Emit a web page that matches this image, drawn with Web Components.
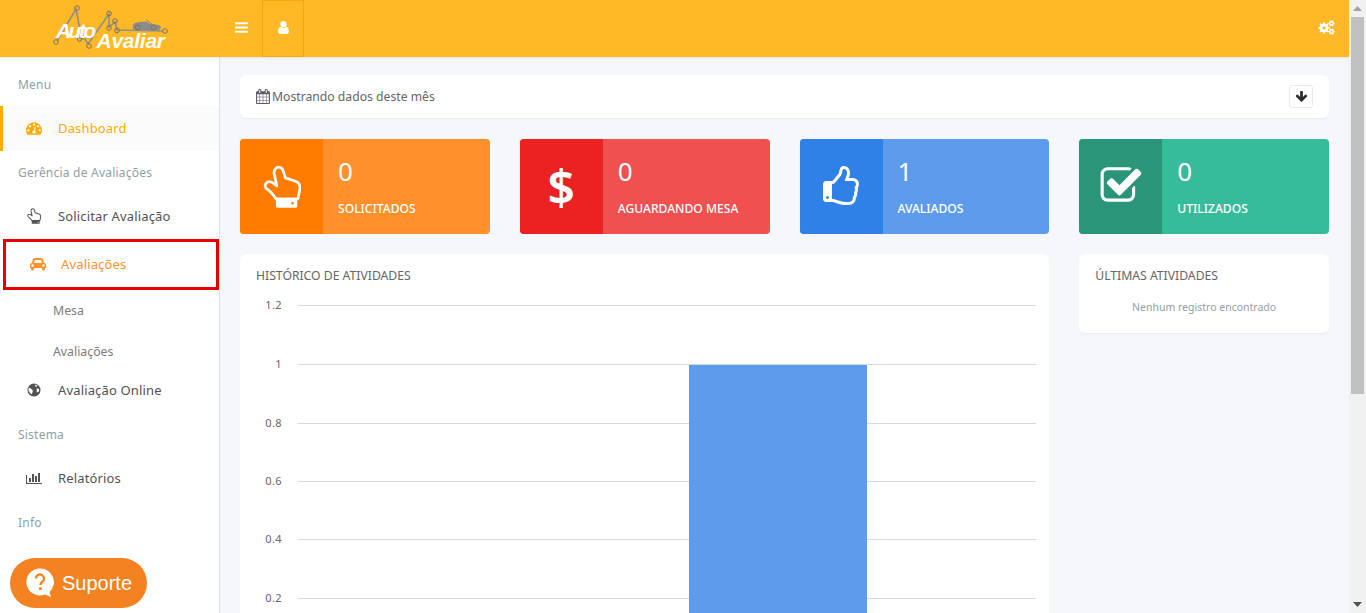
<!DOCTYPE html>
<html lang="pt-BR">
<head>
<meta charset="utf-8">
<title>Auto Avaliar</title>
<style>
  html, body { margin: 0; padding: 0; height: 100%; overflow: hidden; background: #f5f7fa; }
  body { font-family: "Noto Sans", "Open Sans", sans-serif; font-size: 13px; color: #656565; }
</style>
</head>
<body>
<aa-app>
  <aa-header slot="header"></aa-header>
  <aa-sidebar slot="sidebar">
    <aa-nav-label>Menu</aa-nav-label>
    <aa-nav-item icon="dashboard" active>Dashboard</aa-nav-item>
    <aa-nav-label>Gerência de Avaliações</aa-nav-label>
    <aa-nav-item icon="hand">Solicitar Avaliação</aa-nav-item>
    <aa-nav-item icon="car" highlight>Avaliações</aa-nav-item>
    <aa-nav-sub>Mesa</aa-nav-sub>
    <aa-nav-sub last>Avaliações</aa-nav-sub>
    <aa-nav-item icon="globe">Avaliação Online</aa-nav-item>
    <aa-nav-label>Sistema</aa-nav-label>
    <aa-nav-item icon="chart">Relatórios</aa-nav-item>
    <aa-nav-label>Info</aa-nav-label>
  </aa-sidebar>
  <aa-filter-bar>Mostrando dados deste mês</aa-filter-bar>
  <aa-stats>
    <aa-stat-card icon="hand" value="0" pane="#ff7c00" body="#ff902b">SOLICITADOS</aa-stat-card>
    <aa-stat-card icon="dollar" value="0" pane="#ec2121" body="#f05050">AGUARDANDO MESA</aa-stat-card>
    <aa-stat-card icon="thumb" value="1" pane="#2f80e7" body="#5d9cec">AVALIADOS</aa-stat-card>
    <aa-stat-card icon="check" value="0" pane="#2b957a" body="#37bc9b">UTILIZADOS</aa-stat-card>
    <aa-panel class="wide" heading="HISTÓRICO DE ATIVIDADES"><aa-chart></aa-chart></aa-panel>
    <aa-panel heading="ÚLTIMAS ATIVIDADES"><aa-empty>Nenhum registro encontrado</aa-empty></aa-panel>
  </aa-stats>
  <aa-support slot="overlay"></aa-support>
  <aa-scrollbar slot="scrollbar"></aa-scrollbar>
</aa-app>

<script>
// gear outline with a round hole, used by the header cogs icon
function gear(cx, cy, outer, inner, hole, teeth) {
  let d = "";
  for (let i = 0; i < teeth; i++) {
    const step = (Math.PI * 2) / teeth;
    const a = i * step;
    const pts = [[inner, a - step * 0.32], [outer, a - step * 0.2], [outer, a + step * 0.2], [inner, a + step * 0.32]];
    pts.forEach(([r, t], j) => {
      const cmd = i === 0 && j === 0 ? "M" : "L";
      d += `${cmd}${(cx + r * Math.cos(t)).toFixed(2)} ${(cy + r * Math.sin(t)).toFixed(2)}`;
    });
  }
  d += `Z M${cx - hole} ${cy} a${hole} ${hole} 0 1 0 ${hole * 2} 0 a${hole} ${hole} 0 1 0 ${-hole * 2} 0 Z`;
  return d;
}

const FA = "0 0 1792 1792";
const ICONS = {
  bars: [FA, '<path d="M1664 1344v128q0 26-19 45t-45 19h-1408q-26 0-45-19t-19-45v-128q0-26 19-45t45-19h1408q26 0 45 19t19 45zm0-512v128q0 26-19 45t-45 19h-1408q-26 0-45-19t-19-45v-128q0-26 19-45t45-19h1408q26 0 45 19t19 45zm0-512v128q0 26-19 45t-45 19h-1408q-26 0-45-19t-19-45v-128q0-26 19-45t45-19h1408q26 0 45 19t19 45z"/>'],
  user: [FA, '<path d="M1536 1399q0 109-62.5 187t-150.5 78h-854q-88 0-150.5-78t-62.5-187q0-85 8.5-160.5t31.5-152 58.5-131 94-89 134.5-34.5q131 128 313 128t313-128q76 0 134.5 34.5t94 89 58.5 131 31.5 152 8.5 160.5zm-256-887q0 159-112.5 271.5t-271.5 112.5-271.5-112.5-112.5-271.5 112.5-271.5 271.5-112.5 271.5 112.5 112.5 271.5z"/>'],
  down: [FA, '<path d="M1675 832q0 53-37 90l-651 652q-39 37-91 37-53 0-90-37l-651-652q-38-36-38-90 0-53 38-91l74-75q39-37 91-37 53 0 90 37l294 294v-704q0-52 38-90t90-38h128q52 0 90 38t38 90v704l294-294q37-37 90-37 52 0 91 37l75 75q37 39 37 91z"/>'],
  check: [FA, '<path d="M1472 930v318q0 119-84.5 203.5t-203.5 84.5h-832q-119 0-203.5-84.5t-84.5-203.5v-832q0-119 84.5-203.5t203.5-84.5h832q63 0 117 25 15 7 18 23 3 17-9 29l-49 49q-10 10-23 10-3 0-9-2-23-6-45-6h-832q-66 0-113 47t-47 113v832q0 66 47 113t113 47h832q66 0 113-47t47-113v-254q0-13 9-22l64-64q10-10 23-10 6 0 12 3 20 8 20 29zm231-489l-814 814q-24 24-57 24t-57-24l-430-430q-24-24-24-57t24-57l110-110q24-24 57-24t57 24l263 263 647-647q24-24 57-24t57 24l110 110q24 24 24 57t-24 57z"/>'],
  car: ["0 0 2048 1792", '<path d="M480 1088q0-66-47-113t-113-47-113 47-47 113 47 113 113 47 113-47 47-113zm36-320h1016l-89-357q-2-8-14-17.5t-21-9.5h-768q-9 0-21 9.5t-14 17.5zm1372 320q0-66-47-113t-113-47-113 47-47 113 47 113 113 47 113-47 47-113zm160-96v384q0 14-9 23t-23 9h-96v128q0 80-56 136t-136 56-136-56-56-136v-128h-1024v128q0 80-56 136t-136 56-136-56-56-136v-128h-96q-14 0-23-9t-9-23v-384q0-93 65.5-158.5t158.5-65.5h28l105-419q23-94 104-157.5t179-63.5h768q98 0 179 63.5t104 157.5l105 419h28q93 0 158.5 65.5t65.5 158.5z"/>'],
  thumb: [FA, '<path d="M384 1344q0-26-19-45t-45-19-45 19-19 45 19 45 45 19 45-19 19-45zm1152-576q0-51-39-89.5t-89-38.5h-352q0-58 48-159.5t48-160.5q0-98-32-145t-128-47q-26 26-38 85t-30.5 125.5-59.5 109.5q-22 23-77 91-4 5-23 30t-31.5 41-34.5 42.5-40 44-38.5 35.5-40 27-35.5 9h-32v640h32q13 0 31.5 3t33 6.5 38 11 35 11.5 35.5 12.5 29 10.5q211 73 342 73h121q192 0 192-167 0-26-5-56 30-16 47.5-52.5t17.5-73.5-18-69q53-50 53-119 0-25-10-55.5t-25-47.5q32-1 53.5-47t21.5-81zm128-1q0 89-49 163 9 33 9 69 0 77-38 144 3 21 3 43 0 101-60 178 1 139-85 219.5t-227 80.5h-129q-96 0-189.5-22.5t-216.5-65.5q-116-40-138-40h-288q-53 0-90.5-37.5t-37.5-90.5v-640q0-53 37.5-90.5t90.5-37.5h274q36-24 137-155 58-75 107-128 24-25 35.5-85.5t30.5-126.5 62-108q39-37 90-37 84 0 151 32.5t102 101.5 35 186q0 93-48 192h176q104 0 180 76t76 179z"/>'],
  dashboard: [FA, '<path d="M384 1152q0-53-37.5-90.5t-90.5-37.5-90.5 37.5-37.5 90.5 37.5 90.5 90.5 37.5 90.5-37.5 37.5-90.5zm192-448q0-53-37.5-90.5t-90.5-37.5-90.5 37.5-37.5 90.5 37.5 90.5 90.5 37.5 90.5-37.5 37.5-90.5zm428 481l101-382q6-26-7.5-48.5t-38.5-29.5-48 6.5-30 39.5l-101 382q-60 5-107 43.5t-63 98.5q-20 77 20 146t117 89 146-20 89-117q16-60-6-117t-72-91zm660-33q0-53-37.5-90.5t-90.5-37.5-90.5 37.5-37.5 90.5 37.5 90.5 90.5 37.5 90.5-37.5 37.5-90.5zm-640-640q0-53-37.5-90.5t-90.5-37.5-90.5 37.5-37.5 90.5 37.5 90.5 90.5 37.5 90.5-37.5 37.5-90.5zm448 192q0-53-37.5-90.5t-90.5-37.5-90.5 37.5-37.5 90.5 37.5 90.5 90.5 37.5 90.5-37.5 37.5-90.5zm320 448q0 261-141 483-19 29-54 29h-1402q-35 0-54-29-141-221-141-483 0-182 71-348t191-286 286-191 348-71 348 71 286 191 191 286 71 348z"/>'],
  chart: ["0 0 2048 1792", '<path d="M640 896v512h-256v-512h256zm384-512v1024h-256v-1024h256zm1024 1152v128h-2048v-1152h128v1024h1920zm-640-896v768h-256v-768h256zm384-384v1152h-256v-1152h256z"/>'],
  calendar: ["0 0 1664 1792", '<path d="M128 1664h288v-288h-288v288zm352 0h320v-288h-320v288zm-352-352h288v-320h-288v320zm352 0h320v-320h-320v320zm-352-384h288v-288h-288v288zm736 736h320v-288h-320v288zm-384-736h320v-288h-320v288zm768 736h288v-288h-288v288zm-384-352h320v-320h-320v320zm-352-864v-288q0-13-9.5-22.5t-22.5-9.5h-64q-13 0-22.5 9.5t-9.5 22.5v288q0 13 9.5 22.5t22.5 9.5h64q13 0 22.5-9.5t9.5-22.5zm736 864h288v-320h-288v320zm-384-384h320v-288h-320v288zm384 0h288v-288h-288v288zm32-480v-288q0-13-9.5-22.5t-22.5-9.5h-64q-13 0-22.5 9.5t-9.5 22.5v288q0 13 9.5 22.5t22.5 9.5h64q13 0 22.5-9.5t9.5-22.5zm384-64v1280q0 52-38 90t-90 38h-1408q-52 0-90-38t-38-90v-1280q0-52 38-90t90-38h128v-96q0-66 47-113t113-47h64q66 0 113 47t47 113v96h384v-96q0-66 47-113t113-47h64q66 0 113 47t47 113v96h128q52 0 90 38t38 90z"/>'],
  hand: ["0 0 110 127", '<path d="M37 100 C30 88 24 80 12 72 C5 67 3 60 8 54 C13 48 21 48 28 53 L40 62 L32 27 C30 16 36 6 45 6 C53 6 58 12 60 22 L65 38 L95 48 C105 52 109 60 108 70 L102 100 Z" fill="none" stroke="currentColor" stroke-width="8" stroke-linejoin="round"/><path d="M37 100 H100 V122 Q100 126 96 126 H42 Q37 126 37 122 Z"/><circle cx="86" cy="113" r="4" fill="var(--hole, #fff)"/>'],
  globe: [FA, '<circle cx="896" cy="896" r="730"/><path fill="var(--hole, #fff)" d="M1000 300 C1100 310 1200 350 1290 420 L1180 520 L1040 470 Z M1180 760 L1380 720 L1480 860 L1430 1060 L1300 1180 L1200 1100 L1220 920 Z M300 620 L520 720 L720 860 L760 1080 L640 1380 C480 1280 300 1100 270 860 Z"/>'],
  cogs: ["0 0 20 18", `<path fill-rule="evenodd" d="${gear(7, 9.5, 6.9, 5.2, 2, 8)}"/><path fill-rule="evenodd" d="${gear(16, 4, 3.9, 2.9, 1.2, 6)}"/><path fill-rule="evenodd" d="${gear(16, 14, 3.9, 2.9, 1.2, 6)}"/>`]
};

class AaIcon extends HTMLElement {
  connectedCallback() {
    const [box, body] = ICONS[this.getAttribute("name")];
    this.attachShadow({ mode: "open" }).innerHTML = `
      <style>
        :host { display: inline-flex; align-items: center; justify-content: center; line-height: 0; }
        svg { width: 100%; height: 100%; fill: currentColor; display: block; }
      </style>
      <svg viewBox="${box}" xmlns="http://www.w3.org/2000/svg">${body}</svg>`;
  }
}

class AaApp extends HTMLElement {
  constructor() {
    super();
    this.attachShadow({ mode: "open" }).innerHTML = `
      <style>
        :host { display: flex; height: 613px; width: 1366px; overflow: hidden; position: relative; }
        .page { width: 1349px; display: flex; flex-direction: column; height: 613px; overflow: hidden; flex: none; }
        .body { display: flex; flex: 1; min-height: 0; }
        .content { flex: 1; min-width: 0; padding: 18px 20px 0; display: flex; flex-direction: column; gap: 21px; overflow: hidden; }
      </style>
      <div class="page">
        <slot name="header"></slot>
        <div class="body">
          <slot name="sidebar"></slot>
          <div class="content"><slot></slot></div>
        </div>
      </div>
      <slot name="scrollbar"></slot>
      <slot name="overlay"></slot>`;
  }
}

class AaHeader extends HTMLElement {
  constructor() {
    super();
    this.attachShadow({ mode: "open" }).innerHTML = `
      <style>
        :host { display: flex; align-items: stretch; height: 57px; flex: none; background: #ffb927; color: #fff; box-shadow: 0 1px 2px rgba(0,0,0,.08); position: relative; z-index: 2; }
        .brand { width: 220px; flex: none; display: flex; align-items: center; }
        .toggle { width: 42px; display: flex; align-items: center; justify-content: center; padding-bottom: 2px; box-sizing: border-box; }
        .toggle + .toggle { border: 1px solid #f7a70e; }
        .spacer { flex: 1; }
        .cog { margin: 0 14px 3px 0; align-self: center; width: 17px; height: 15px; }
        aa-icon.bars { width: 15px; height: 15px; }
        aa-icon.user { width: 15px; height: 15px; }
        svg text { font-family: "Liberation Sans", Arial, sans-serif; font-style: italic; font-weight: 700; fill: #fff; }
      </style>
      <div class="brand">
        <svg width="220" height="57" viewBox="0 0 220 57" xmlns="http://www.w3.org/2000/svg">
          <g fill="none" stroke="#8e8e8e" stroke-width="1.6">
            <path d="M57 41 L76 9 L80 30 L79 38 L85 39 L88 44 L109 14 L109 27 L115 22 L117 30 L163 31"/>
            <g stroke="#7b7460" stroke-width="1">
              <circle cx="56" cy="42" r="2.3"/><circle cx="77" cy="8" r="2.3"/><circle cx="79.5" cy="39" r="2.3"/>
              <circle cx="89" cy="46" r="2.3"/><circle cx="109" cy="13.5" r="2.3"/><circle cx="109" cy="28" r="2.3"/>
              <circle cx="115" cy="21" r="2.3"/><circle cx="117" cy="30.5" r="2.3"/><circle cx="165" cy="31" r="2.3"/>
            </g>
          </g>
          <path d="M133 29 C132 24 134 23 139 22 L146 21.5 L151 24 L159 25 L161 27 L160 29.5 C156 30.5 137 30.5 133 29 Z" fill="#8b8b8b"/>
          <path d="M146 19.5 L152 24" stroke="#8b8b8b" stroke-width="1" fill="none"/>
          <circle cx="137.5" cy="27.5" r="2.4" fill="#8b8b8b" stroke="#7b7460"/><circle cx="153.5" cy="27.5" r="2.4" fill="#8b8b8b" stroke="#7b7460"/>
          <text x="56" y="38" font-size="21" textLength="40">Auto</text>
          <text x="96.5" y="47.5" font-size="21" textLength="68.5">Avaliar</text>
        </svg>
      </div>
      <div class="toggle"><aa-icon class="bars" name="bars"></aa-icon></div>
      <div class="toggle"><aa-icon class="user" name="user"></aa-icon></div>
      <div class="spacer"></div>
      <aa-icon class="cog" name="cogs"></aa-icon>`;
  }
}

class AaSidebar extends HTMLElement {
  constructor() {
    super();
    this.attachShadow({ mode: "open" }).innerHTML = `
      <style>
        :host { display: flex; flex-direction: column; width: 220px; flex: none; box-sizing: border-box; background: #fff; border-right: 1px solid #dde2e8; padding-top: 6px; overflow: hidden; }
      </style>
      <slot></slot>`;
  }
}

class AaNavLabel extends HTMLElement {
  constructor() {
    super();
    this.attachShadow({ mode: "open" }).innerHTML = `
      <style>
        :host { display: flex; align-items: center; height: 43px; padding-left: 18px; font-size: 12px; letter-spacing: .22px; color: #909fa7; flex: none; }
      </style>
      <slot></slot>`;
  }
}

class AaNavItem extends HTMLElement {
  connectedCallback() {
    const name = this.getAttribute("icon");
    this.attachShadow({ mode: "open" }).innerHTML = `
      <style>
        :host { display: flex; align-items: center; height: 45px; box-sizing: border-box; padding: 0 0 2px 23px; border-left: 3px solid transparent; gap: 16px; color: #515253; font-size: 13px; letter-spacing: .15px; flex: none; --hole: #fff; }
        :host([active]) { background: #fbfbfb; border-left-color: #ffab00; color: #ffab00; --hole: #fbfbfb; }
        :host([highlight]) { height: 51px; margin-left: 3px; border: 3px solid #e60000; padding-left: 24px; gap: 15px; color: #ff902b; }
        aa-icon { width: 16px; height: 16px; flex: none; }
      </style>
      <aa-icon name="${name}"></aa-icon>
      <span><slot></slot></span>`;
  }
}

class AaNavSub extends HTMLElement {
  constructor() {
    super();
    this.attachShadow({ mode: "open" }).innerHTML = `
      <style>
        :host { display: flex; align-items: center; height: 41px; padding-left: 53px; font-size: 12.3px; color: #7c7c7c; flex: none; }
        :host([last]) { margin-bottom: -4px; }
      </style>
      <slot></slot>`;
  }
}

class AaFilterBar extends HTMLElement {
  constructor() {
    super();
    this.attachShadow({ mode: "open" }).innerHTML = `
      <style>
        :host { display: flex; align-items: center; height: 43px; flex: none; box-sizing: border-box; padding: 0 16px; background: #fff; border-radius: 6px; box-shadow: 0 1px 1px rgba(0,0,0,.05); color: #656565; font-size: 12.2px; }
        aa-icon.cal { width: 14px; height: 15px; margin-right: 2px; color: #5f5a66; }
        span { flex: 1; }
        button { width: 24px; height: 23px; padding: 0; display: flex; align-items: center; justify-content: center; background: #fff; border: 1px solid #eaeaea; border-radius: 3px; color: #2b2b2b; }
        button aa-icon { width: 13px; height: 13px; }
      </style>
      <aa-icon class="cal" name="calendar"></aa-icon>
      <span><slot></slot></span>
      <button><aa-icon name="down"></aa-icon></button>`;
  }
}

class AaStats extends HTMLElement {
  constructor() {
    super();
    this.attachShadow({ mode: "open" }).innerHTML = `
      <style>
        :host { display: grid; grid-template-columns: repeat(4, 1fr); column-gap: 30px; row-gap: 20px; align-items: start; flex: none; }
        ::slotted(.wide) { grid-column: span 3; }
      </style>
      <slot></slot>`;
  }
}

class AaStatCard extends HTMLElement {
  connectedCallback() {
    const name = this.getAttribute("icon");
    const isDollar = name === "dollar";
    const glyph = isDollar
      ? `<span class="dollar">$</span>`
      : `<aa-icon class="${name}" name="${name}"></aa-icon>`;
    this.attachShadow({ mode: "open" }).innerHTML = `
      <style>
        :host { display: flex; height: 95px; border-radius: 4px; overflow: hidden; color: #fff; background: ${this.getAttribute("body")}; --hole: ${this.getAttribute("pane")}; }
        .pane { width: 83px; flex: none; display: flex; align-items: center; justify-content: center; background: ${this.getAttribute("pane")}; }
        .pane aa-icon.hand { width: 38px; height: 43px; }
        .pane aa-icon.thumb { width: 42px; height: 42px; }
        .pane aa-icon.check { width: 44px; height: 44px; margin-top: -2px; }
        .dollar { font: 600 48px "Noto Sans", sans-serif; line-height: 1; }
        .text { padding: 0 15px; display: flex; flex-direction: column; }
        .value { font-size: 26px; line-height: 32px; margin-top: 16px; }
        .label { font-size: 12.1px; line-height: 18px; margin-top: 13px; font-weight: 500; }
      </style>
      <div class="pane">${glyph}</div>
      <div class="text">
        <div class="value">${this.getAttribute("value")}</div>
        <div class="label"><slot></slot></div>
      </div>`;
  }
}

class AaPanel extends HTMLElement {
  connectedCallback() {
    this.attachShadow({ mode: "open" }).innerHTML = `
      <style>
        :host { display: block; background: #fff; border-radius: 6px; box-shadow: 0 1px 1px rgba(0,0,0,.05); min-width: 0; }
        h2 { margin: 0; padding: 13px 16px 0; font-size: 12.2px; line-height: 18px; font-weight: 400; color: #656565; }
      </style>
      <h2>${this.getAttribute("heading")}</h2>
      <slot></slot>`;
  }
}

class AaEmpty extends HTMLElement {
  constructor() {
    super();
    this.attachShadow({ mode: "open" }).innerHTML = `
      <style>
        :host { display: block; text-align: center; font-size: 10.5px; line-height: 16px; color: #909fa7; padding: 14px 16px 18px; }
      </style>
      <slot></slot>`;
  }
}

class AaChart extends HTMLElement {
  connectedCallback() {
    const ticks = [["1.2", 20], ["1", 79], ["0.8", 138], ["0.6", 196], ["0.4", 254], ["0.2", 313]];
    const rows = ticks.map(([t, y]) => `
      <line x1="58" x2="796" y1="${y + 0.5}" y2="${y + 0.5}" stroke="#d9d9d9"/>
      <text x="42" y="${y + 4}" text-anchor="end">${t}</text>`).join("");
    this.attachShadow({ mode: "open" }).innerHTML = `
      <style>
        :host { display: block; height: 340px; overflow: hidden; }
        svg { display: block; }
        text { font-family: "Noto Sans", sans-serif; font-size: 11px; letter-spacing: .4px; fill: #666; }
      </style>
      <svg width="809" height="340" xmlns="http://www.w3.org/2000/svg">
        ${rows}
        <rect x="449" y="80" width="178" height="300" fill="#5d9cec"/>
      </svg>`;
  }
}

class AaSupport extends HTMLElement {
  constructor() {
    super();
    this.attachShadow({ mode: "open" }).innerHTML = `
      <style>
        :host { position: absolute; left: 10px; top: 558px; width: 137px; height: 50px; box-sizing: border-box; border-radius: 25px; background: #f58220; color: #fff; display: flex; align-items: center; padding-left: 16px; gap: 7px; font: 20px "Liberation Sans", Arial, sans-serif; z-index: 5; }
        svg { width: 29px; height: 30px; flex: none; }
      </style>
      <svg viewBox="0 0 29 30" xmlns="http://www.w3.org/2000/svg">
        <path d="M14 .5 a13.5 13.5 0 1 0 5 26 l6 2.5 -1.5-5 A13.5 13.5 0 0 0 14 .5 Z" fill="#fff"/>
        <path d="M10 10.5 a4 4 0 1 1 6.4 3.2 c-1.4 1-2 1.7-2 3.3" fill="none" stroke="#f58220" stroke-width="2.3"/>
        <circle cx="14.4" cy="20.5" r="1.6" fill="#f58220"/>
      </svg>
      <span>Suporte</span>`;
  }
}

class AaScrollbar extends HTMLElement {
  constructor() {
    super();
    this.attachShadow({ mode: "open" }).innerHTML = `
      <style>
        :host { display: flex; flex-direction: column; width: 17px; height: 613px; flex: none; background: #f1f1f1; }
        .btn { height: 17px; display: flex; align-items: center; justify-content: center; flex: none; }
        .thumb { height: 377px; margin-left: 2px; background: #c1c1c1; width: 13px; flex: none; }
        .track { flex: 1; }
        svg { width: 9px; height: 5px; }
      </style>
      <div class="btn"><svg viewBox="0 0 9 5"><path d="M4.5 0 L9 5 H0 Z" fill="#a3a3a3"/></svg></div>
      <div class="thumb"></div>
      <div class="track"></div>
      <div class="btn"><svg viewBox="0 0 9 5"><path d="M0 0 H9 L4.5 5 Z" fill="#505050"/></svg></div>`;
  }
}

customElements.define("aa-icon", AaIcon);
customElements.define("aa-app", AaApp);
customElements.define("aa-header", AaHeader);
customElements.define("aa-sidebar", AaSidebar);
customElements.define("aa-nav-label", AaNavLabel);
customElements.define("aa-nav-item", AaNavItem);
customElements.define("aa-nav-sub", AaNavSub);
customElements.define("aa-filter-bar", AaFilterBar);
customElements.define("aa-stats", AaStats);
customElements.define("aa-stat-card", AaStatCard);
customElements.define("aa-panel", AaPanel);
customElements.define("aa-empty", AaEmpty);
customElements.define("aa-chart", AaChart);
customElements.define("aa-support", AaSupport);
customElements.define("aa-scrollbar", AaScrollbar);
</script>
</body>
</html>
